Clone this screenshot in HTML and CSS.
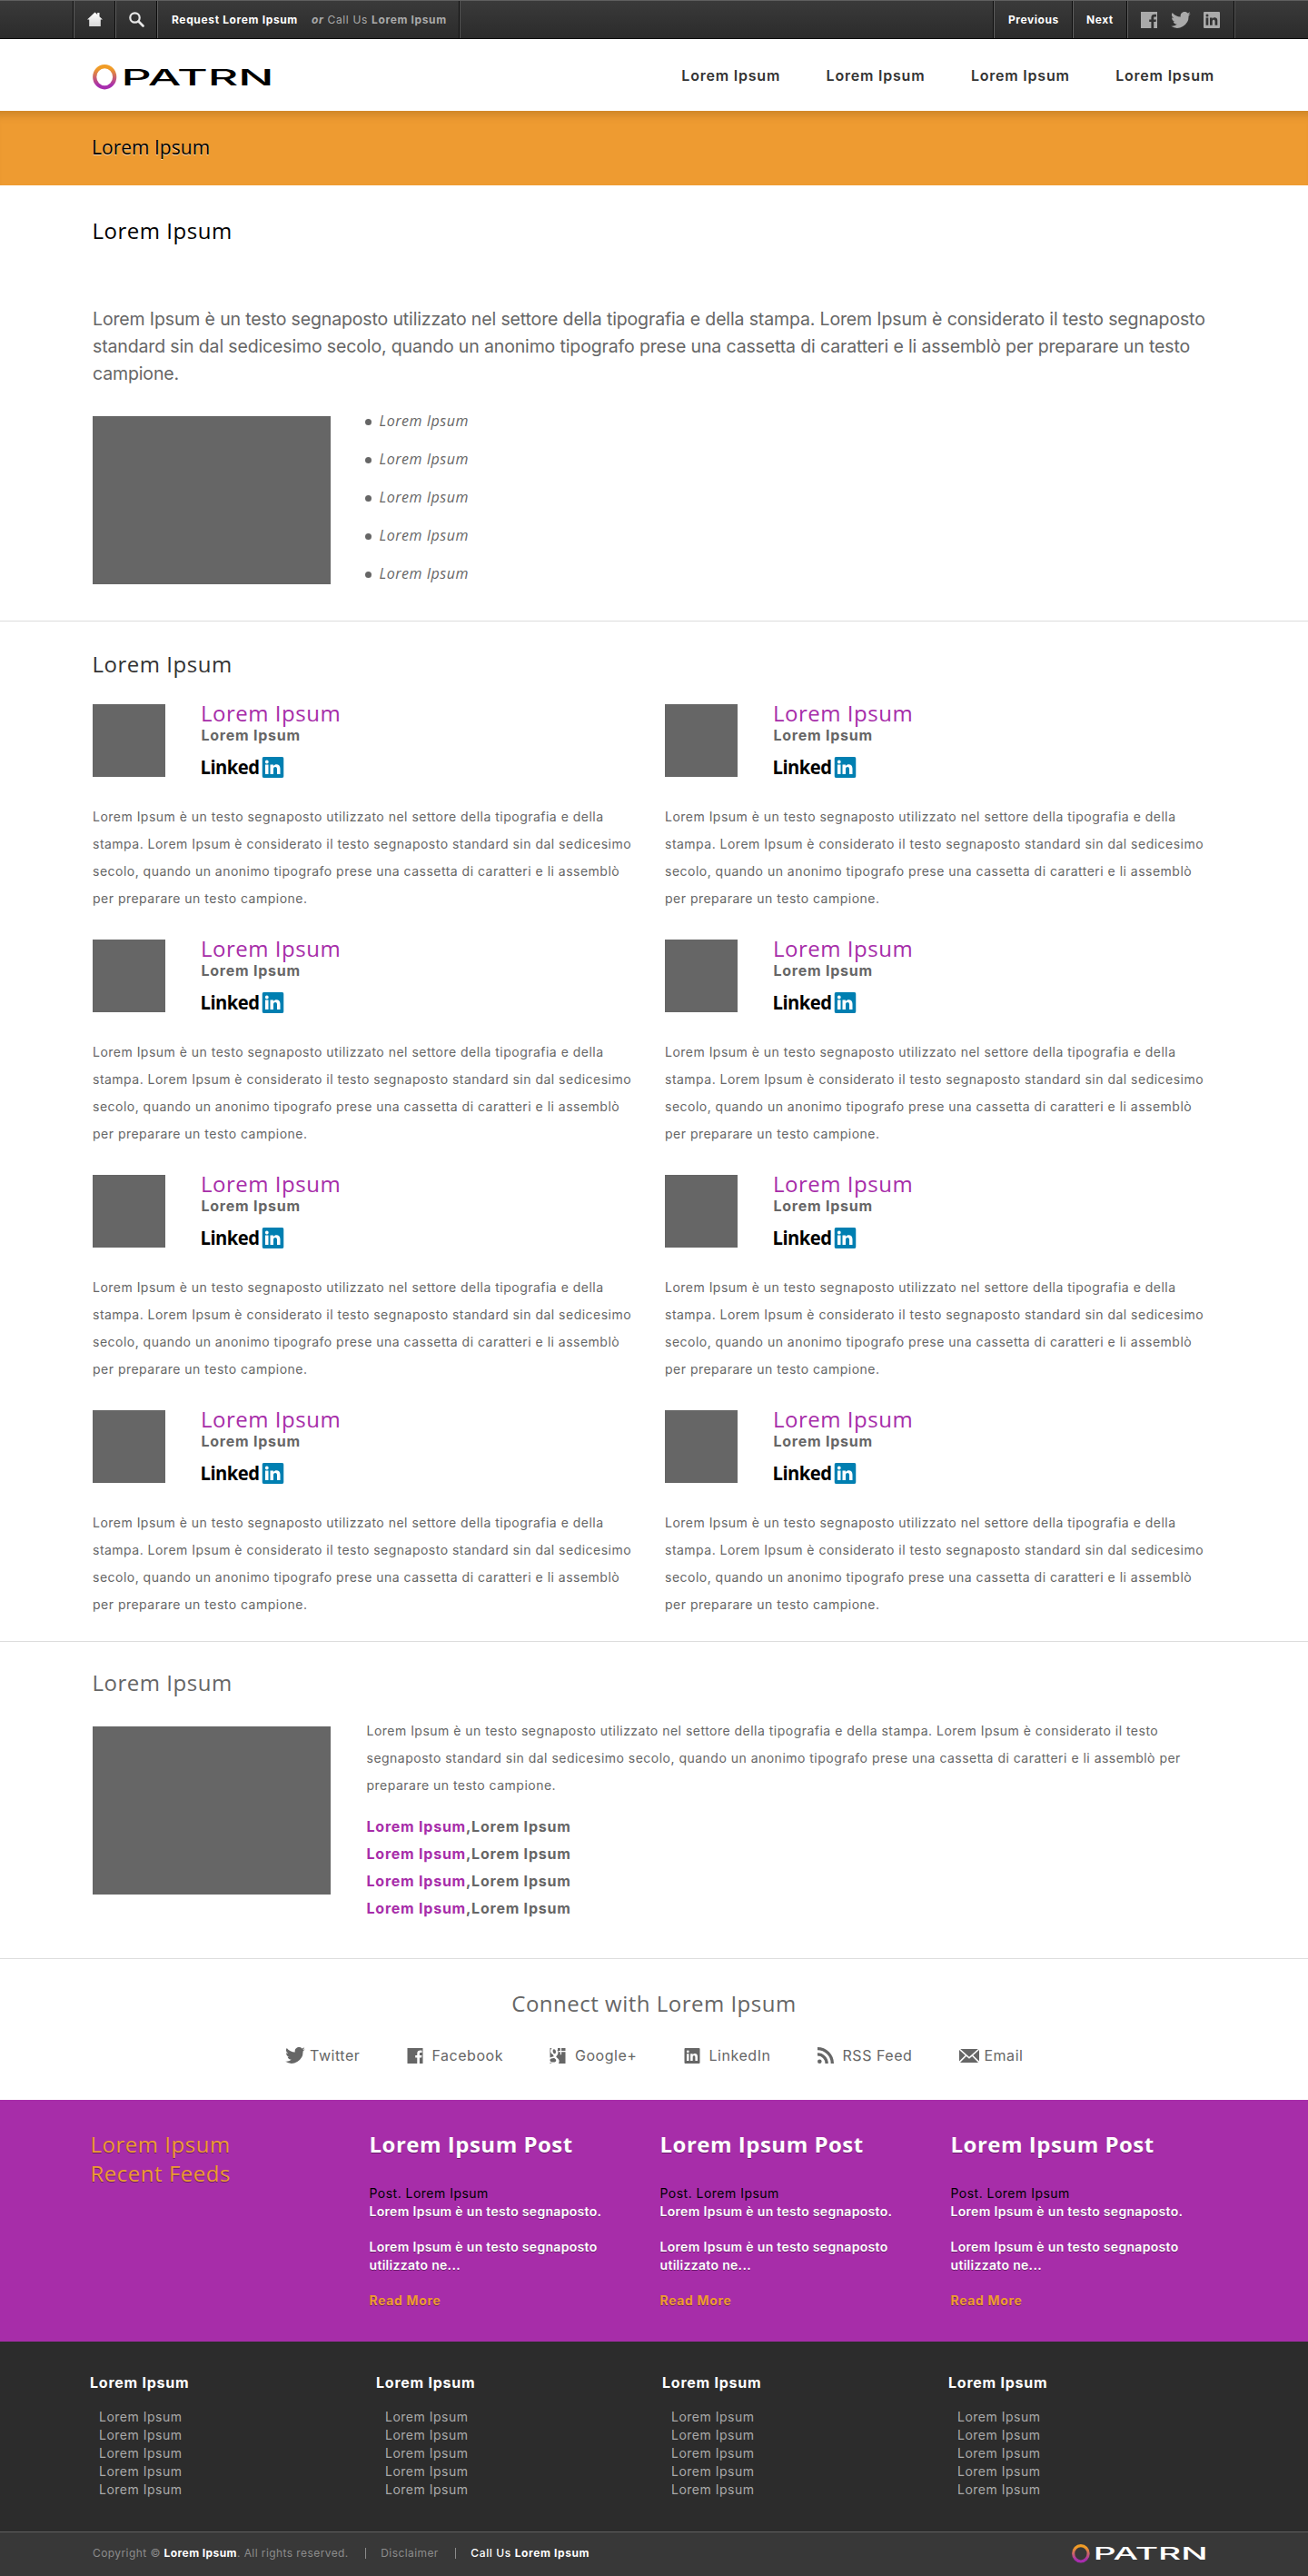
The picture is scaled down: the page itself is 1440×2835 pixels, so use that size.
FILE: index.html
```html
<!DOCTYPE html>
<html lang="it">
<head>
<meta charset="utf-8">
<title>PATRN</title>
<link rel="stylesheet" href="styles.css">
</head>
<body>
<svg width="0" height="0" class="defs" aria-hidden="true">
  <defs>
    <linearGradient id="ring" x1="0" y1="0" x2="0" y2="1"><stop offset="0.1" stop-color="#f09c26"/><stop offset="0.9" stop-color="#a72dae"/></linearGradient>
    <linearGradient id="shine" x1="0" y1="0" x2="0" y2="1"><stop offset="0" stop-color="#fff"/><stop offset="1" stop-color="#d8d8d8"/></linearGradient>
  </defs>
  <symbol id="twitter" viewBox="0 0 24 20"><path d="M24 2.400a9.800 9.800 0 0 1-2.800.8A5 5 0 0 0 23.300.4a9.900 9.900 0 0 1-3.100 1.200 4.900 4.900 0 0 0-8.400 4.500A14 14 0 0 1 1.700 1a4.900 4.900 0 0 0 1.500 6.600A4.900 4.900 0 0 1 1 7v.1a4.900 4.900 0 0 0 3.900 4.800 5 5 0 0 1-2.200.1 4.900 4.900 0 0 0 4.600 3.400A9.900 9.900 0 0 1 0 17.500 14 14 0 0 0 21.500 5z"/></symbol>
  <symbol id="facebook" viewBox="0 0 18 18"><path d="M0 0h18v18h-3.800v-7h2.300l.4-2.600h-2.700V6.700c0-.9.4-1.300 1.300-1.300H17V2.900c-3.400-.5-5.600.4-5.600 3.500v2H9.200V11h2.200v7H0z"/></symbol>
  <symbol id="linkedin" viewBox="0 0 18 18"><path fill-rule="evenodd" d="M1 0h16a1 1 0 0 1 1 1v16a1 1 0 0 1-1 1H1a1 1 0 0 1-1-1V1a1 1 0 0 1 1-1zM2.600 6.600v8.200h2.700V6.600zM4 2.600a1.500 1.500 0 1 0 0 3 1.500 1.500 0 0 0 0-3zM7 6.600v8.200h2.700v-4.300c0-2.300 2.900-2.400 2.900 0v4.300h2.700V9.600c0-3.800-4-4.100-5.600-1.900V6.600z"/></symbol>
  <symbol id="gplus" viewBox="0 0 18 18"><path d="M0 0h2.200C0 2 0 6.200 3.500 7.600c.8.300.2 1.300 1 2.200C2.800 10 1.200 10.300 0 11zM4.700 1.400c2.400 0 3 5 .9 5.200-2.400.2-3.300-5-.9-5.200zM9 0h3v3.300H9.800V4.600H12v3h1.300v-3H18V18H10c1.600-3 .6-5.200-1.700-6.700-1.700-1.200-1.200-1.800 0-2.900C10 6.500 9.700 3.700 8.300 2H9zM13.300 0H18v3.300h-4.700zM0 13.500c.4-1.200 2.300-2 5-1.900 3 1.700 3 4.700-.8 4.900C1.800 16.600.4 15.800 0 14.500zM0 16.600c.7.700 1.500 1.200 2.600 1.400H0z"/></symbol>
  <symbol id="rss" viewBox="0 0 18 18"><circle cx="2.300" cy="15.700" r="2.300"/><path d="M0 0v3.300A14.700 14.700 0 0 1 14.700 18H18A18 18 0 0 0 0 0zM0 6.200v3.300A8.500 8.500 0 0 1 8.500 18h3.300A11.800 11.800 0 0 0 0 6.200z"/></symbol>
  <symbol id="email" viewBox="0 0 22 15"><path d="M1.200 0h19.600L11 8.800zM0 .9l6.700 6L0 13.600zM22 .9v12.700l-6.700-6.700zM7.800 7.900l3.200 2.900 3.200-2.900 6.800 7.100H1z"/></symbol>
  <symbol id="in-badge" viewBox="0 0 24 23">
    <rect width="24" height="23" rx="2" fill="#007fb1"/>
    <path fill="#fff" d="M3.500 8.600H7V19H3.500zM5.300 3.600a1.900 1.900 0 1 1 0 3.800 1.900 1.900 0 0 1 0-3.800zM9 8.600h3.400V10c2.200-2.900 7.600-2.400 7.600 2.800V19h-3.500v-5.600c0-3.300-4-3-4 0V19H9z"/>
  </symbol>
</svg>

<div class="topbar">
  <div class="cells">
    <a class="cell cell-icon"><svg width="17" height="17" viewBox="0 0 17 17"><path fill="url(#shine)" d="M8.500.5L0 8.500h2.200V16h12.600V8.500H17l-3.500-3.300V1h-2.300v2z"/></svg></a>
    <a class="cell cell-icon"><svg width="17" height="17" viewBox="0 0 17 17"><circle cx="6.500" cy="6.500" r="5.200" fill="none" stroke="#e8e8e8" stroke-width="2.200"/><path d="M10.500 10.500l5 5" stroke="#e8e8e8" stroke-width="2.600" stroke-linecap="round"/></svg></a>
    <div class="cell cell-call"><b class="request">Request Lorem Ipsum</b><span><b><i>or</i></b> Call Us <b>Lorem Ipsum</b></span></div>
  </div>
  <div class="cells">
    <a class="cell cell-prev">Previous</a>
    <a class="cell cell-next">Next</a>
    <div class="cell cell-social">
      <svg width="18" height="18"><use href="#facebook"/></svg>
      <svg width="22" height="18"><use href="#twitter"/></svg>
      <svg width="18" height="18"><use href="#linkedin"/></svg>
    </div>
  </div>
</div>

<header class="header">
  <svg class="logo" width="204" height="28" viewBox="0 0 204 28"><ellipse cx="13.200" cy="13.700" rx="11" ry="11.600" fill="none" stroke="url(#ring)" stroke-width="4.200"/><text x="31.500" y="23" class="wordmark" textLength="168" lengthAdjust="spacingAndGlyphs">PATRN</text></svg>
  <nav class="nav"><a>Lorem Ipsum</a><a>Lorem Ipsum</a><a>Lorem Ipsum</a><a>Lorem Ipsum</a></nav>
</header>

<div class="banner">Lorem Ipsum</div>

<section class="section intro">
  <h1>Lorem Ipsum</h1>
  <p class="lead">Lorem Ipsum è un testo segnaposto utilizzato nel settore della tipografia e della stampa. Lorem Ipsum è considerato il testo segnaposto standard sin dal sedicesimo secolo, quando un anonimo tipografo prese una cassetta di caratteri e li assemblò per preparare un testo campione.</p>
  <div class="media">
    <div class="picture"></div>
    <ul class="points"><li>Lorem Ipsum</li><li>Lorem Ipsum</li><li>Lorem Ipsum</li><li>Lorem Ipsum</li><li>Lorem Ipsum</li></ul>
  </div>
</section>

<section class="section team">
  <h2>Lorem Ipsum</h2>
  <div class="people">
    <article class="person">
      <div class="person-head"><div class="avatar"></div><div><h3>Lorem Ipsum</h3><strong>Lorem Ipsum</strong><svg class="linkedin-logo" width="93" height="30"><text x="0.500" y="23.400" class="linked" textLength="65" lengthAdjust="spacingAndGlyphs">Linked</text><use href="#in-badge" x="68.500" y="4" width="24" height="23"/></svg></div></div>
      <p>Lorem Ipsum è un testo segnaposto utilizzato nel settore della tipografia e della stampa. Lorem Ipsum è considerato il testo segnaposto standard sin dal sedicesimo secolo, quando un anonimo tipografo prese una cassetta di caratteri e li assemblò per preparare un testo campione.</p>
    </article>
    <article class="person">
      <div class="person-head"><div class="avatar"></div><div><h3>Lorem Ipsum</h3><strong>Lorem Ipsum</strong><svg class="linkedin-logo" width="93" height="30"><text x="0.500" y="23.400" class="linked" textLength="65" lengthAdjust="spacingAndGlyphs">Linked</text><use href="#in-badge" x="68.500" y="4" width="24" height="23"/></svg></div></div>
      <p>Lorem Ipsum è un testo segnaposto utilizzato nel settore della tipografia e della stampa. Lorem Ipsum è considerato il testo segnaposto standard sin dal sedicesimo secolo, quando un anonimo tipografo prese una cassetta di caratteri e li assemblò per preparare un testo campione.</p>
    </article>
    <article class="person">
      <div class="person-head"><div class="avatar"></div><div><h3>Lorem Ipsum</h3><strong>Lorem Ipsum</strong><svg class="linkedin-logo" width="93" height="30"><text x="0.500" y="23.400" class="linked" textLength="65" lengthAdjust="spacingAndGlyphs">Linked</text><use href="#in-badge" x="68.500" y="4" width="24" height="23"/></svg></div></div>
      <p>Lorem Ipsum è un testo segnaposto utilizzato nel settore della tipografia e della stampa. Lorem Ipsum è considerato il testo segnaposto standard sin dal sedicesimo secolo, quando un anonimo tipografo prese una cassetta di caratteri e li assemblò per preparare un testo campione.</p>
    </article>
    <article class="person">
      <div class="person-head"><div class="avatar"></div><div><h3>Lorem Ipsum</h3><strong>Lorem Ipsum</strong><svg class="linkedin-logo" width="93" height="30"><text x="0.500" y="23.400" class="linked" textLength="65" lengthAdjust="spacingAndGlyphs">Linked</text><use href="#in-badge" x="68.500" y="4" width="24" height="23"/></svg></div></div>
      <p>Lorem Ipsum è un testo segnaposto utilizzato nel settore della tipografia e della stampa. Lorem Ipsum è considerato il testo segnaposto standard sin dal sedicesimo secolo, quando un anonimo tipografo prese una cassetta di caratteri e li assemblò per preparare un testo campione.</p>
    </article>
    <article class="person">
      <div class="person-head"><div class="avatar"></div><div><h3>Lorem Ipsum</h3><strong>Lorem Ipsum</strong><svg class="linkedin-logo" width="93" height="30"><text x="0.500" y="23.400" class="linked" textLength="65" lengthAdjust="spacingAndGlyphs">Linked</text><use href="#in-badge" x="68.500" y="4" width="24" height="23"/></svg></div></div>
      <p>Lorem Ipsum è un testo segnaposto utilizzato nel settore della tipografia e della stampa. Lorem Ipsum è considerato il testo segnaposto standard sin dal sedicesimo secolo, quando un anonimo tipografo prese una cassetta di caratteri e li assemblò per preparare un testo campione.</p>
    </article>
    <article class="person">
      <div class="person-head"><div class="avatar"></div><div><h3>Lorem Ipsum</h3><strong>Lorem Ipsum</strong><svg class="linkedin-logo" width="93" height="30"><text x="0.500" y="23.400" class="linked" textLength="65" lengthAdjust="spacingAndGlyphs">Linked</text><use href="#in-badge" x="68.500" y="4" width="24" height="23"/></svg></div></div>
      <p>Lorem Ipsum è un testo segnaposto utilizzato nel settore della tipografia e della stampa. Lorem Ipsum è considerato il testo segnaposto standard sin dal sedicesimo secolo, quando un anonimo tipografo prese una cassetta di caratteri e li assemblò per preparare un testo campione.</p>
    </article>
    <article class="person">
      <div class="person-head"><div class="avatar"></div><div><h3>Lorem Ipsum</h3><strong>Lorem Ipsum</strong><svg class="linkedin-logo" width="93" height="30"><text x="0.500" y="23.400" class="linked" textLength="65" lengthAdjust="spacingAndGlyphs">Linked</text><use href="#in-badge" x="68.500" y="4" width="24" height="23"/></svg></div></div>
      <p>Lorem Ipsum è un testo segnaposto utilizzato nel settore della tipografia e della stampa. Lorem Ipsum è considerato il testo segnaposto standard sin dal sedicesimo secolo, quando un anonimo tipografo prese una cassetta di caratteri e li assemblò per preparare un testo campione.</p>
    </article>
    <article class="person">
      <div class="person-head"><div class="avatar"></div><div><h3>Lorem Ipsum</h3><strong>Lorem Ipsum</strong><svg class="linkedin-logo" width="93" height="30"><text x="0.500" y="23.400" class="linked" textLength="65" lengthAdjust="spacingAndGlyphs">Linked</text><use href="#in-badge" x="68.500" y="4" width="24" height="23"/></svg></div></div>
      <p>Lorem Ipsum è un testo segnaposto utilizzato nel settore della tipografia e della stampa. Lorem Ipsum è considerato il testo segnaposto standard sin dal sedicesimo secolo, quando un anonimo tipografo prese una cassetta di caratteri e li assemblò per preparare un testo campione.</p>
    </article>
  </div>
</section>

<section class="section board">
  <h2>Lorem Ipsum</h2>
  <div class="media">
    <div class="picture"></div>
    <div class="board-text">
      <p>Lorem Ipsum è un testo segnaposto utilizzato nel settore della tipografia e della stampa. Lorem Ipsum è considerato il testo segnaposto standard sin dal sedicesimo secolo, quando un anonimo tipografo prese una cassetta di caratteri e li assemblò per preparare un testo campione.</p>
      <ul class="members">
        <li><a>Lorem Ipsum</a>,Lorem Ipsum</li>
        <li><a>Lorem Ipsum</a>,Lorem Ipsum</li>
        <li><a>Lorem Ipsum</a>,Lorem Ipsum</li>
        <li><a>Lorem Ipsum</a>,Lorem Ipsum</li>
      </ul>
    </div>
  </div>
</section>

<section class="connect">
  <h2>Connect with Lorem Ipsum</h2>
  <div class="links">
    <a><svg width="22" height="18"><use href="#twitter"/></svg>Twitter</a>
    <a><svg width="18" height="17"><use href="#facebook"/></svg>Facebook</a>
    <a><svg width="18" height="17"><use href="#gplus"/></svg>Google+</a>
    <a><svg width="18" height="17"><use href="#linkedin"/></svg>LinkedIn</a>
    <a><svg width="18" height="18"><use href="#rss"/></svg>RSS Feed</a>
    <a><svg width="22" height="15"><use href="#email"/></svg>Email</a>
  </div>
</section>

<section class="feeds">
  <h2>Lorem Ipsum<br>Recent Feeds</h2>
  <article class="post"><h3>Lorem Ipsum Post</h3><span class="by">Post. Lorem Ipsum</span><p>Lorem Ipsum è un testo segnaposto.</p><p>Lorem Ipsum è un testo segnaposto utilizzato ne...</p><a>Read More</a></article>
  <article class="post"><h3>Lorem Ipsum Post</h3><span class="by">Post. Lorem Ipsum</span><p>Lorem Ipsum è un testo segnaposto.</p><p>Lorem Ipsum è un testo segnaposto utilizzato ne...</p><a>Read More</a></article>
  <article class="post"><h3>Lorem Ipsum Post</h3><span class="by">Post. Lorem Ipsum</span><p>Lorem Ipsum è un testo segnaposto.</p><p>Lorem Ipsum è un testo segnaposto utilizzato ne...</p><a>Read More</a></article>
</section>

<footer>
  <div class="sitemap">
    <div><h4>Lorem Ipsum</h4><ul><li>Lorem Ipsum</li><li>Lorem Ipsum</li><li>Lorem Ipsum</li><li>Lorem Ipsum</li><li>Lorem Ipsum</li></ul></div>
    <div><h4>Lorem Ipsum</h4><ul><li>Lorem Ipsum</li><li>Lorem Ipsum</li><li>Lorem Ipsum</li><li>Lorem Ipsum</li><li>Lorem Ipsum</li></ul></div>
    <div><h4>Lorem Ipsum</h4><ul><li>Lorem Ipsum</li><li>Lorem Ipsum</li><li>Lorem Ipsum</li><li>Lorem Ipsum</li><li>Lorem Ipsum</li></ul></div>
    <div><h4>Lorem Ipsum</h4><ul><li>Lorem Ipsum</li><li>Lorem Ipsum</li><li>Lorem Ipsum</li><li>Lorem Ipsum</li><li>Lorem Ipsum</li></ul></div>
  </div>
  <div class="legal">
    <span>Copyright © <b>Lorem Ipsum</b>. All rights reserved.</span>
    <span class="legal-item">Disclaimer</span>
    <span class="legal-item call"><em>Call Us</em> <b>Lorem Ipsum</b></span>
    <svg class="legal-logo" width="153" height="21" viewBox="0 0 204 28"><ellipse cx="13.200" cy="13.700" rx="11" ry="11.600" fill="none" stroke="url(#ring)" stroke-width="4.200"/><text x="31.500" y="23" class="wordmark" textLength="168" lengthAdjust="spacingAndGlyphs">PATRN</text></svg>
  </div>
</footer>
</body>
</html>
```
FILE: styles.css
```css
* { box-sizing: border-box; margin: 0; padding: 0; }
body { width: 1440px; background: #fff; color: #666; font: 14px/30px Inter, "Liberation Sans", sans-serif; letter-spacing: .486px; }
ul { list-style: none; }
svg { display: block; flex: none; fill: currentColor; }
.defs { position: absolute; }
h1, h2, h3, .banner { font-family: "Open Sans", "Noto Sans", sans-serif; font-weight: 400; letter-spacing: .52px; }
h1, h2 { font-size: 24px; line-height: 32px; margin-left: -.5px; }

.wordmark { font: 500 24.500px Inter, sans-serif; letter-spacing: 0; fill: currentColor; }
.linked { font: 700 20.500px "Open Sans", sans-serif; letter-spacing: -.5px; fill: #000; }

/* top bar */
.topbar { display: flex; justify-content: space-between; height: 43px; padding: 0 81px 0 80px; border-top: 1px solid #5f5f5f; border-bottom: 1px solid #0c0c0c; background: linear-gradient(#3a3a3a, #2b2b2b); color: #fff; font-size: 12px; line-height: 40px; letter-spacing: .64px; }
.cells { display: flex; border-right: 1px solid #0c0c0c; box-shadow: 1px 0 #555; }
.cell { display: flex; align-items: center; border-left: 1px solid #0c0c0c; box-shadow: inset 1px 0 #5f5f5f; }
.cell-icon { width: 46px; padding-left: 15px; }
.cell-call { width: 333px; padding-left: 16px; color: #aaa; }
.cell-call .request { color: #fff; margin-right: 15px; }
.cell-prev, .cell-next { font-weight: 700; letter-spacing: .55px; }
.cell-prev { width: 87px; padding-left: 16px; }
.cell-next { width: 60px; padding-left: 15px; }
.cell-social { width: 118px; padding-left: 15px; gap: 14.500px; color: #aaa; }

/* header */
.header { display: flex; justify-content: space-between; align-items: flex-start; height: 79px; padding: 28px 103px 0 102px; color: #000; }
.nav { display: flex; gap: 50.500px; padding-top: 2px; color: #333; font-weight: 600; font-size: 16px; line-height: 20px; letter-spacing: .79px; }
.banner { height: 82px; padding: 0 102px 0 101px; background: #ee9b31; box-shadow: inset 0 12px 9px -7px rgba(90, 60, 10, .22); color: #000; font-size: 21px; line-height: 80px; letter-spacing: .02px; text-shadow: 0 1px rgba(255, 255, 255, .65); }

/* content */
.section { padding: 0 102px; border-bottom: 1px solid #ddd; }
.intro { padding-top: 34px; padding-bottom: 31px; }
.intro h1 { color: #000; }
.lead { margin: 66px 0 32px; font-size: 19.500px; letter-spacing: -.14px; }
.media { display: flex; align-items: flex-start; }
.picture { flex: none; width: 262px; height: 185px; background: #666; }
.points { margin: -16px 0 0 38px; font: italic 16px/42px "Open Sans", sans-serif; letter-spacing: .52px; }
.points li { display: flex; align-items: center; gap: 8.500px; }
.points li::before { content: ""; width: 7px; height: 7px; margin-top: 3px; border-radius: 50%; background: #666; }

.team { padding-top: 31px; padding-bottom: 25px; }
.team h2 { margin-bottom: 28px; color: #333; }
.people { display: grid; grid-template-columns: 1fr 1fr; gap: 30px 24px; }
.person-head { display: flex; gap: 39px; height: 80px; margin-bottom: 29px; }
.avatar { width: 80px; height: 80px; background: #666; }
.person h3 { margin-top: -3px; font-size: 24px; line-height: 26px; color: #a72da9; }
.person strong { display: block; margin: 1px 0 10px .5px; font-size: 16px; line-height: 20px; letter-spacing: .75px; }
.linkedin-logo { margin-left: -1px; }

.board { padding-top: 29px; padding-bottom: 40px; }
.board h2 { margin-bottom: 32px; }
.board-text { width: 917px; margin: -10px 0 0 39.500px; }
.members { margin-top: 15px; font-size: 16px; font-weight: 700; letter-spacing: .77px; }
.members a { color: #a72da9; }

.connect { height: 155px; padding-top: 33px; text-align: center; }
.connect h2 { margin: 0 0 31px; letter-spacing: .5px; }
.links { display: flex; justify-content: center; gap: 51.500px; font-size: 16px; line-height: 20px; letter-spacing: .54px; }
.links a { display: flex; align-items: center; }
.links svg { margin-right: 9.500px; }
.links svg[width="22"] { margin-right: 5.500px; }

/* feeds */
.feeds { display: grid; grid-template-columns: 306.500px 320px 320px 1fr; height: 266px; padding: 33px 99px 0 100px; background: #a72da9; color: #fff; line-height: 20px; font-weight: 600; letter-spacing: .31px; text-shadow: 0 1px rgba(0, 0, 0, .4); }
.feeds h2 { color: #ee9b31; }
.post h3 { margin-bottom: 28px; font-size: 24px; line-height: 32px; font-weight: 700; letter-spacing: .5px; }
.by { display: block; color: #000; font-weight: 400; letter-spacing: .48px; text-shadow: none; }
.post p { width: 280px; margin-bottom: 19px; }
.post a { color: #ee9b31; font-weight: 700; letter-spacing: .65px; }

/* footer */
.sitemap { display: grid; grid-template-columns: repeat(4, 315px); height: 209px; padding: 35px 0 0 99px; background: #2c2c2c; color: #aaa; line-height: 20px; letter-spacing: .5px; }
.sitemap h4 { margin-bottom: 18px; color: #fff; font-size: 16px; letter-spacing: .76px; }
.sitemap ul { padding-left: 10px; }
.legal { display: flex; align-items: center; height: 49px; padding: 0 107px 2px 102px; border-top: 1px solid #5f5f5f; background: #383838; color: #8c8c8c; font-size: 12px; line-height: 20px; letter-spacing: .42px; }
.legal b, .call { color: #fff; }
.legal em { font-style: normal; font-weight: 500; }
.call { letter-spacing: .6px; }
.legal-item { display: flex; gap: 4px; align-items: center; margin-left: 18.500px; }
.legal-item::before { content: ""; width: 1px; height: 12px; margin-right: 12px; background: #8c8c8c; }
.legal-logo { margin-left: auto; color: #fff; }
```
